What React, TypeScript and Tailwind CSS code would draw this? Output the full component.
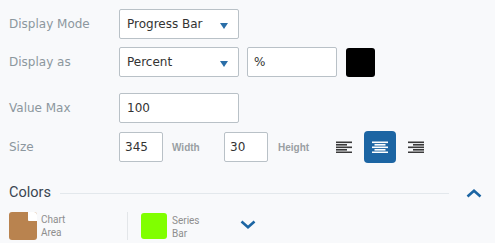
import React from "react";

const dv = { fontFamily: '"DejaVu Sans", Verdana, sans-serif' };
const rb = { fontFamily: 'Roboto, "Noto Sans", sans-serif' };
const ar = { fontFamily: '"Liberation Sans", Arial, sans-serif' };

function Tri() {
  return (
    <svg width="8" height="6" viewBox="0 0 8 6" className="absolute right-[10px] top-[13px]">
      <path d="M0 0 L8 0 L4 6 Z" fill="#2a6ea8" />
    </svg>
  );
}

function AlignIcon({ kind, color }: { kind: "l" | "c" | "r"; color: string }) {
  const long = 16;
  const short = 11;
  const xs = kind === "l" ? 0 : kind === "c" ? (16 - short) / 2 : 16 - short;
  const ys = [0.5, 3, 5.5, 8, 10.5];
  return (
    <svg width="16" height="12" viewBox="0 0 16 12">
      {ys.map((y, i) => (
        <rect key={i} x={i % 2 ? xs : 0} y={y} width={i % 2 ? short : long} height="1.6" fill={color} />
      ))}
    </svg>
  );
}

export default function App() {
  return (
    <div className="w-[495px] h-[243px] bg-[#f8f9fb] overflow-hidden relative">
      <div className="flex flex-col pl-[9px] pt-[9px]">
        {/* Row 1 */}
        <div className="flex items-center h-[30px]">
          <div className="w-[110px] text-[12px] text-[#8c979e]" style={dv}>Display Mode</div>
          <div className="relative w-[120px] h-[30px] bg-white border border-[#b9c1c7] rounded-[2px] flex items-center pl-[7px] text-[12px] text-[#333]" style={dv}>
            Progress Bar
            <Tri />
          </div>
        </div>
        {/* Row 2 */}
        <div className="flex items-center h-[30px] mt-[8px]">
          <div className="w-[110px] text-[12px] text-[#8c979e]" style={dv}>Display as</div>
          <div className="relative w-[120px] h-[30px] bg-white border border-[#b9c1c7] rounded-[2px] flex items-center pl-[7px] text-[12px] text-[#333]" style={dv}>
            Percent
            <Tri />
          </div>
          <div className="ml-[8px] w-[90px] h-[30px] bg-white border border-[#b9c1c7] rounded-[2px] flex items-center pl-[6px] text-[12px] text-[#333]" style={dv}>
            %
          </div>
          <div className="ml-[9px] w-[29px] h-[29px] bg-black rounded-[3px]" />
        </div>
        {/* Row 3 */}
        <div className="flex items-center h-[30px] mt-[16px]">
          <div className="w-[110px] text-[12px] text-[#8c979e]" style={dv}>Value Max</div>
          <div className="w-[120px] h-[30px] bg-white border border-[#b9c1c7] rounded-[2px] flex items-center pl-[7px] text-[12px] text-[#333]" style={dv}>
            100
          </div>
        </div>
        {/* Row 4 */}
        <div className="flex items-center h-[32px] mt-[8px]">
          <div className="w-[110px] text-[12px] text-[#8c979e]" style={dv}>Size</div>
          <div className="w-[44px] h-[30px] bg-white border border-[#b9c1c7] rounded-[2px] flex items-center pl-[5px] text-[12px] text-[#333]" style={dv}>
            345
          </div>
          <div className="ml-[9px] w-[52px] text-[10px] font-bold text-[#9a9fa3]" style={ar}>Width</div>
          <div className="w-[44px] h-[30px] bg-white border border-[#b9c1c7] rounded-[2px] flex items-center pl-[5px] text-[12px] text-[#333]" style={dv}>
            30
          </div>
          <div className="ml-[10px] w-[58px] text-[10px] font-bold text-[#9a9fa3]" style={ar}>Height</div>
          <div className="flex items-center">
            <AlignIcon kind="l" color="#3a3a3a" />
          </div>
          <div className="ml-[12px] w-[32px] h-[32px] flex items-center justify-center bg-[#1c65a3] rounded-[4px]">
            <AlignIcon kind="c" color="#ffffff" />
          </div>
          <div className="ml-[12px] flex items-center">
            <AlignIcon kind="r" color="#3a3a3a" />
          </div>
        </div>
        {/* Colors header */}
        <div className="flex items-center h-[16px] mt-[22px]">
          <div className="text-[14.5px] text-[#3b4651]" style={rb}>Colors</div>
          <div className="ml-[9px] w-[389px] h-px bg-[#e3e8ec]" />
          <svg width="16" height="9" viewBox="0 0 16 9" className="ml-[17px]">
            <path d="M1.5 7.5 L8 1.8 L14.5 7.5" stroke="#1c65a3" strokeWidth="2.6" fill="none" />
          </svg>
        </div>
        {/* Swatches */}
        <div className="flex items-center mt-[11px] h-[28px]">
          <div className="relative w-[28px] h-[28px] bg-[#b9834f] rounded-[3px] overflow-hidden">
            <div className="absolute right-0 top-0 w-[9px] h-[9px] bg-white rounded-bl-[1px]" />
          </div>
          <div className="ml-[4px] flex flex-col text-[10px] leading-[13px] text-[#8e8e8e] w-[86px]" style={rb}>
            <span>Chart</span>
            <span>Area</span>
          </div>
          <div className="w-px h-[28px] bg-[#e3e6e9]" />
          <div className="ml-[13px] w-[26px] h-[26px] bg-[#80ff00] rounded-[3px]" />
          <div className="ml-[5px] flex flex-col text-[10px] leading-[13px] text-[#8e8e8e] w-[68px] pt-[2px]" style={rb}>
            <span>Series</span>
            <span>Bar</span>
          </div>
          <svg width="16" height="9" viewBox="0 0 16 9" className="mt-[-4px]">
            <path d="M1.5 1.5 L8 7.2 L14.5 1.5" stroke="#1c65a3" strokeWidth="2.6" fill="none" />
          </svg>
        </div>
      </div>
    </div>
  );
}
